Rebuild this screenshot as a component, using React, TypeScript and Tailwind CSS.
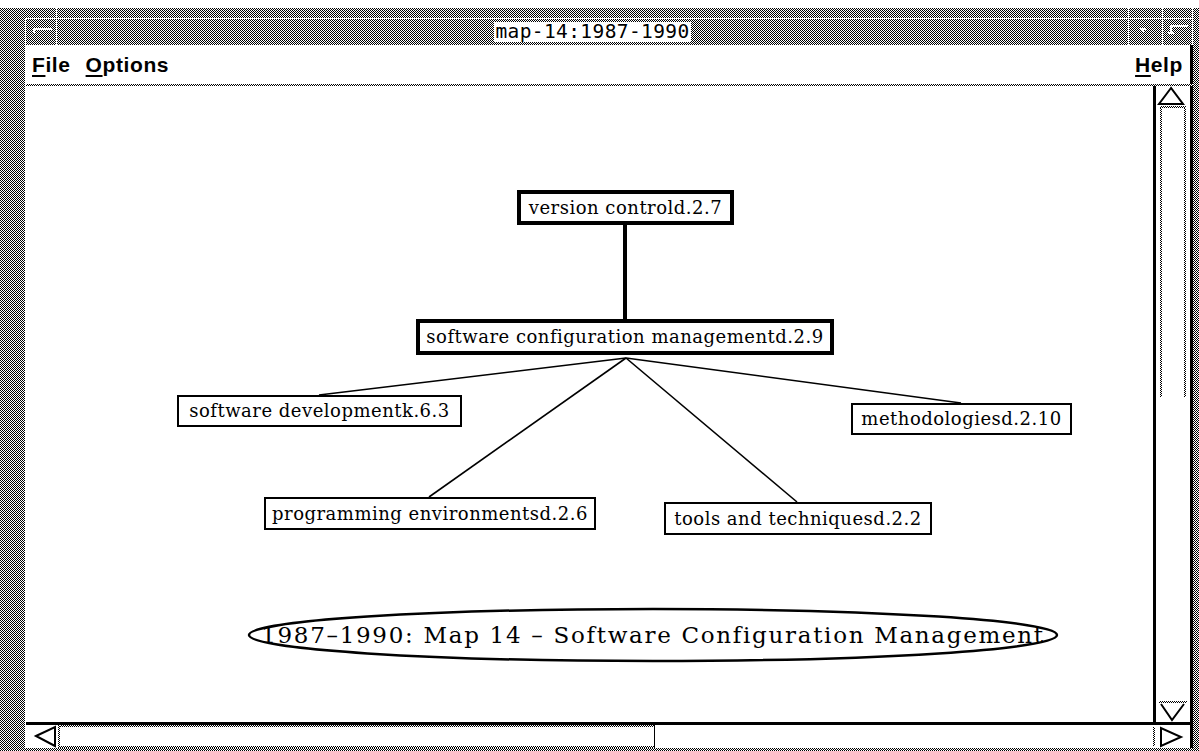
import clsx from 'clsx';

// 1px checkerboard: two stripe layers XOR'd with a difference blend
const dither =
  'bg-[image:repeating-linear-gradient(90deg,#000_0px_1px,#fff_1px_2px),repeating-linear-gradient(0deg,#000_0px_1px,#fff_1px_2px)] bg-blend-difference';

function Node({ label, thick, className }: { label: string; thick?: boolean; className: string }) {
  return (
    <div
      className={clsx(
        'absolute flex items-center justify-center bg-white border-black',
        thick ? 'border-4' : 'border-2',
        className
      )}
    >
      <span className="font-['DejaVu_Serif'] text-[18px] leading-none tracking-[0.5px] text-black whitespace-nowrap">
        {label}
      </span>
    </div>
  );
}

function VScrollbar() {
  return (
    <div className="w-[37px] border-l-[3px] border-black flex flex-col bg-white">
      {/* up arrow */}
      <svg width="34" height="20" className="block">
        <polygon points="15,2 3,18 27,18" fill="none" stroke="#000" strokeWidth="2" />
      </svg>
      {/* thumb */}
      <div className="mx-[4px] h-[291px] flex flex-col">
        <div className={clsx('h-[2px]', dither)} />
        <div className="flex-1 flex">
          <div className={clsx('w-[2px]', dither)} />
          <div className="flex-1" />
          <div className={clsx('w-[2px]', dither)} />
        </div>
      </div>
      <div className="flex-1" />
      {/* down arrow */}
      <div className={clsx('mx-[3px] h-[2px]', dither)} />
      <svg width="34" height="19" className="block">
        <polyline points="5,1 16,17 28,1" fill="none" stroke="#000" strokeWidth="2" />
      </svg>
    </div>
  );
}

function HScrollbar() {
  return (
    <div className="h-[26px] border-t-[3px] border-black bg-white flex">
      <div className="w-[1px]" />
      {/* left arrow */}
      <svg width="31" height="23" className="block">
        <polygon points="9,11 28,2 28,21" fill="none" stroke="#000" strokeWidth="2" />
      </svg>
      {/* thumb */}
      <div className="w-[597px] flex">
        <div className={clsx('w-[2px]', dither)} />
        <div className="flex-1 flex flex-col">
          <div className={clsx('h-[2px]', dither)} />
          <div className="flex-1" />
          <div className={clsx('h-[2px]', dither)} />
        </div>
        <div className="w-[1px] bg-black" />
      </div>
      <div className="flex-1" />
      {/* right arrow */}
      <div className="w-[37px] flex">
        <div className={clsx('w-[2px] my-[2px]', dither)} />
        <svg width="32" height="23" className="block">
          <polygon points="6,3 6,21 26,12" fill="none" stroke="#000" strokeWidth="2" />
        </svg>
      </div>
    </div>
  );
}

export default function App() {
  return (
    <div className={clsx('w-[1199px] h-[751px] overflow-hidden flex flex-col', dither)}>
      {/* top strip */}
      <div className="h-[8px] bg-white" />

      {/* title bar */}
      <div className="h-[37px] flex">
        <div className="w-[25px]" />
        <div className="w-[32px] border-r border-white flex flex-col">
          <div className="mt-[10px] flex-1 border-t border-l border-white relative">
            <div className="absolute left-[7px] top-[9px] w-[19px] h-[2px] bg-white" />
            <div className="absolute left-[7px] top-[9px] w-[2px] h-[5px] bg-white" />
          </div>
        </div>
        <div className="flex-1 flex flex-col">
          <div className="mt-[10px] flex-1 border-t border-white flex items-start justify-center">
            <div className="mt-[3px] bg-white px-[1px] h-[20px] flex items-center">
              <span className="font-['DejaVu_Sans_Mono'] text-[19.5px] leading-none text-black tracking-[0.4px]">
                map-14:1987-1990
              </span>
            </div>
          </div>
        </div>
        <div className="w-[34px] border-l border-white flex flex-col">
          <div className="mt-[10px] flex-1 border-t border-white relative">
            <div className="absolute left-[11px] top-[9px] w-[6px] h-[2px] bg-white" />
            <div className="absolute left-[13px] top-[9px] w-[2px] h-[4px] bg-white" />
          </div>
        </div>
        <div className="w-[31px] border-l border-r border-white flex flex-col">
          <div className="mt-[10px] flex-1 border-t border-white relative">
            <div className="absolute left-[7px] top-[6px] w-[18px] h-[2px] bg-white" />
            <div className="absolute left-[7px] top-[6px] w-[2px] h-[9px] bg-white" />
            <div className="absolute left-[5px] top-[13px] w-[6px] h-[2px] bg-white" />
          </div>
        </div>
        <div className="w-[6px]" />
      </div>

      {/* window body */}
      <div className="ml-[25px] w-[1168px] flex-1 flex flex-col border-l border-white">
        {/* menu bar */}
        <div className="h-[39px] bg-white border-r-[3px] border-black flex items-center justify-between px-[6px] font-['Liberation_Sans'] font-bold text-[21px] text-black tracking-[0.6px]">
          <div className="flex gap-[15px]">
            <span>
              <span className="underline underline-offset-[3px] decoration-2">F</span>ile
            </span>
            <span>
              <span className="underline underline-offset-[3px] decoration-2">O</span>ptions
            </span>
          </div>
          <span className="mr-[1px]">
            <span className="underline underline-offset-[3px] decoration-2">H</span>elp
          </span>
        </div>
        <div className={clsx('h-[2px]', dither)} />

        {/* content */}
        <div className="flex-1 flex border-r-[3px] border-black">
          <div className="w-[1127px] bg-white relative overflow-hidden">
            <svg className="absolute inset-0" width="1127" height="636">
              <line x1="599" y1="139" x2="599" y2="233" stroke="#000" strokeWidth="4" />
              <g stroke="#000" strokeWidth="1.6" fill="none">
                <line x1="600" y1="272" x2="293" y2="309" />
                <line x1="600" y1="272" x2="935" y2="317" />
                <line x1="600" y1="272" x2="403" y2="411" />
                <line x1="600" y1="272" x2="771" y2="416" />
              </g>
              <ellipse cx="627" cy="549" rx="404" ry="26" fill="#fff" stroke="#000" strokeWidth="2.5" />
            </svg>

            <Node thick label="version controld.2.7" className="left-[491px] top-[104px] w-[217px] h-[35px]" />
            <Node thick label="software configuration managementd.2.9" className="left-[390px] top-[233px] w-[418px] h-[36px]" />
            <Node label="software developmentk.6.3" className="left-[151px] top-[309px] w-[285px] h-[32px]" />
            <Node label="methodologiesd.2.10" className="left-[825px] top-[317px] w-[221px] h-[32px]" />
            <Node label="programming environmentsd.2.6" className="left-[238px] top-[411px] w-[332px] h-[33px]" />
            <Node label="tools and techniquesd.2.2" className="left-[638px] top-[416px] w-[268px] h-[33px]" />

            <div className="absolute left-[226px] top-[535px] w-[802px] h-[28px] flex items-center justify-center">
              <span className="font-['DejaVu_Serif'] text-[23px] leading-none tracking-[1.7px] text-black whitespace-nowrap">
                1987–1990: Map 14 – Software Configuration Management
              </span>
            </div>
          </div>
          <VScrollbar />
        </div>

        <div className="border-r-[3px] border-black">
          <HScrollbar />
        </div>
      </div>

      <div className="h-[3px]" />
    </div>
  );
}
